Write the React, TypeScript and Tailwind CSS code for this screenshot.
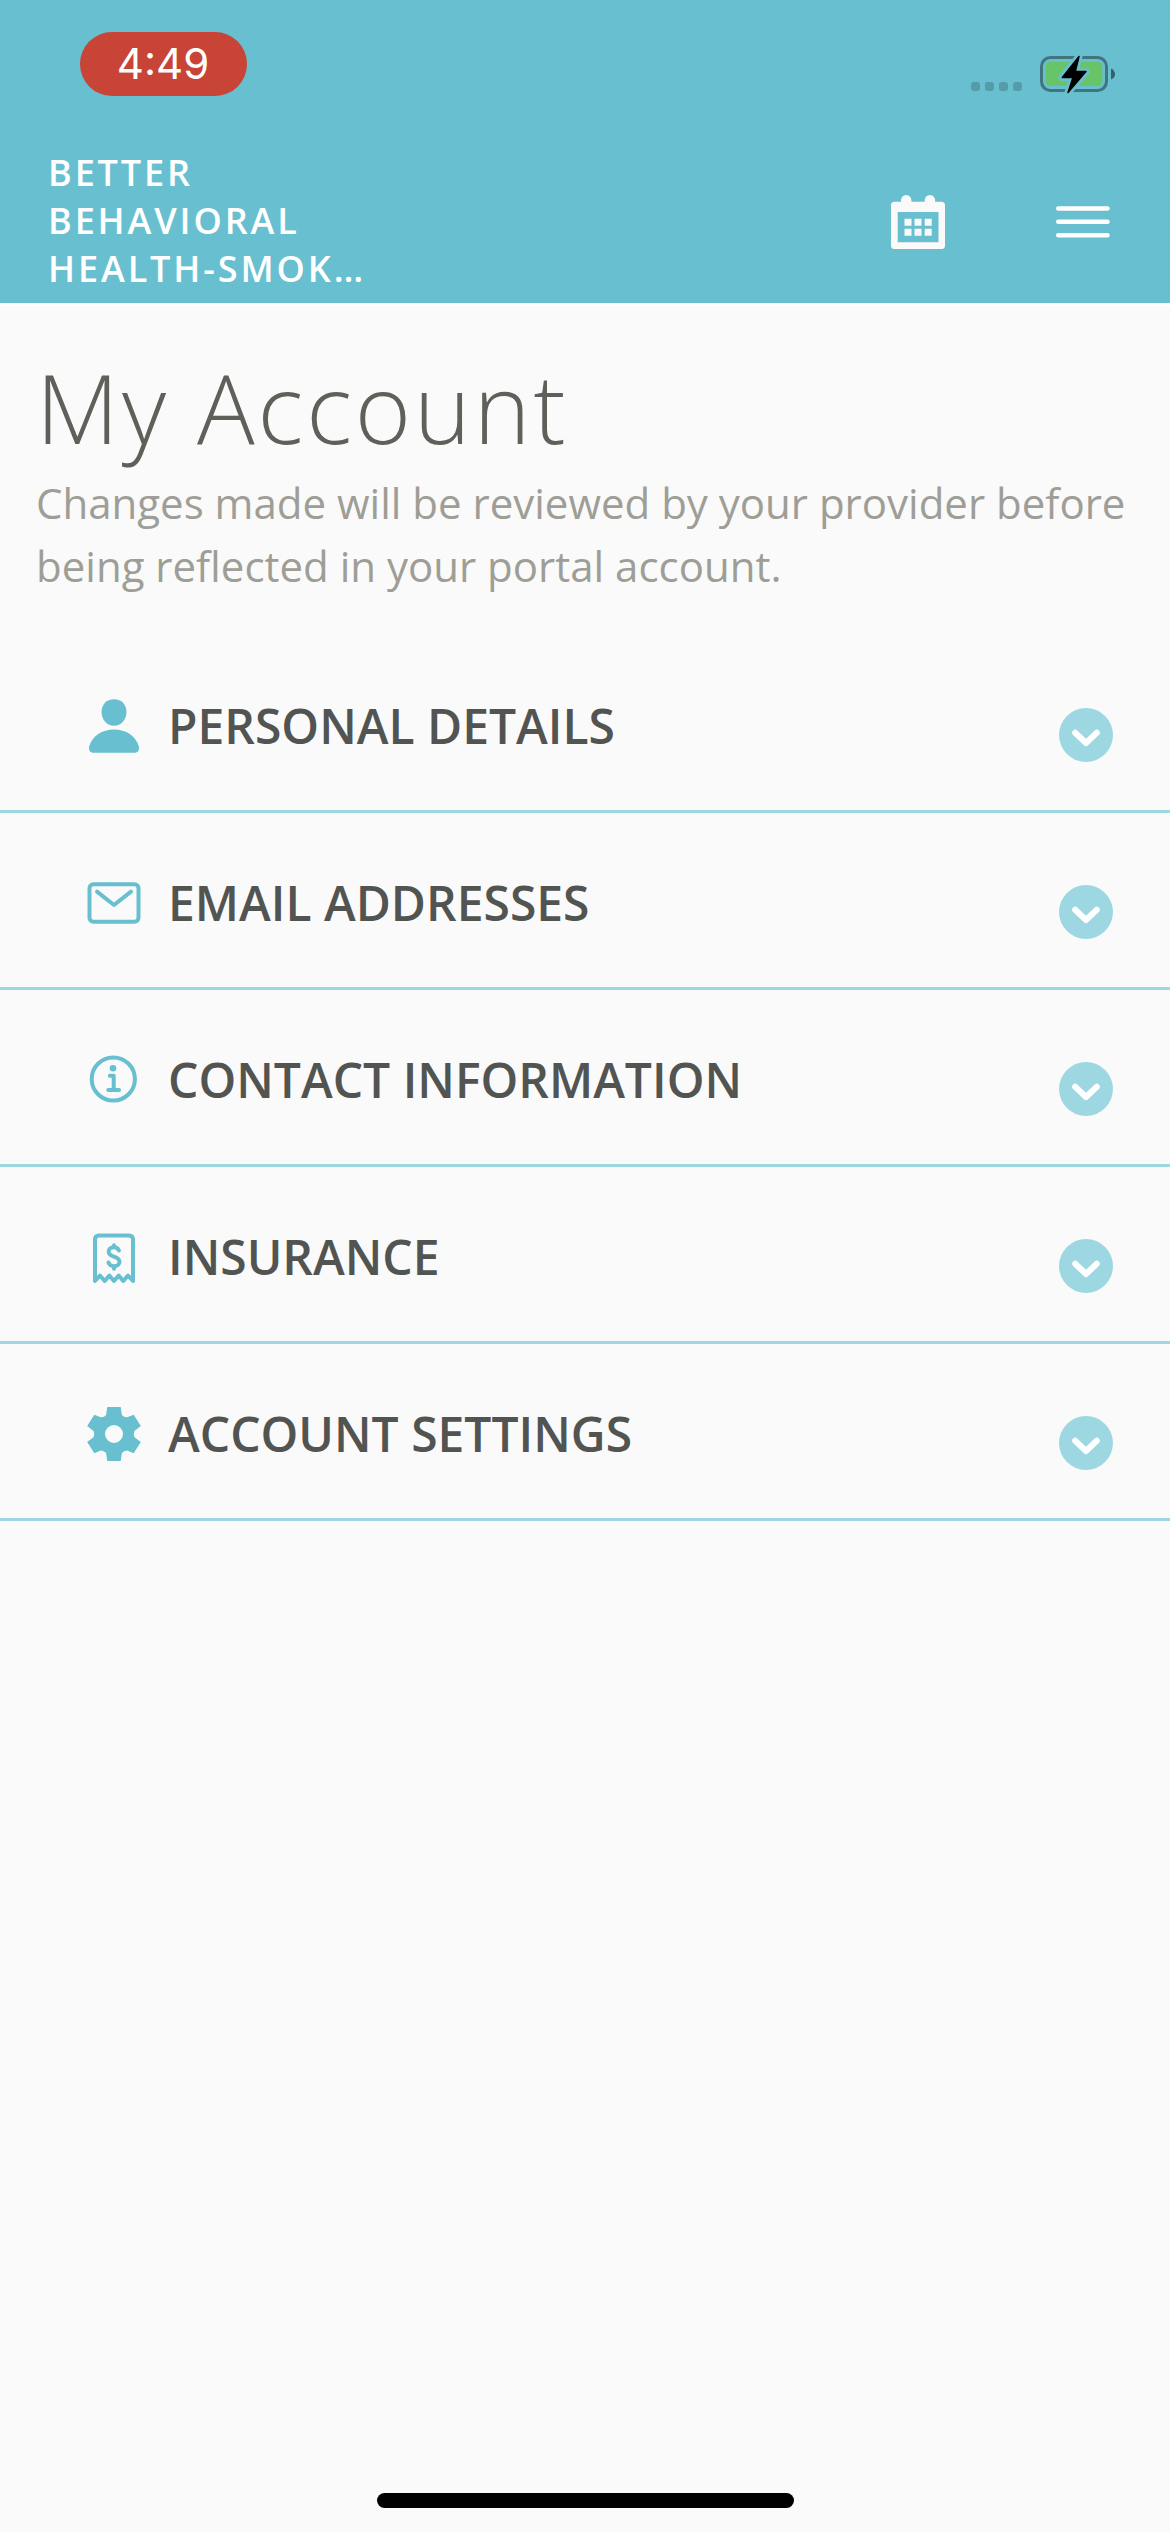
import type { ReactNode } from 'react';

const PersonIcon = () => (
  <svg viewBox="0 0 54 54" className="size-[54px]" fill="#68bfd0">
    <path d="M27 .2C34.5 .2 39.5 5.500 39.500 13C39.500 20.500 34 26.800 27 26.800S14.500 20.500 14.500 13C14.500 5.500 19.500 .2 27 .2Z" />
    <path d="M27 30.500C39 30.500 49 37 51.800 47.500C52.600 51 51 53.800 47.500 53.800H6.500C3 53.800 1.400 51 2.200 47.500C5 37 15 30.500 27 30.500Z" />
  </svg>
);

const MailIcon = () => (
  <svg viewBox="0 0 54 54" className="size-[54px]" fill="none" stroke="#68bfd0" strokeWidth="4" strokeLinecap="round" strokeLinejoin="round">
    <rect x="2.500" y="8.200" width="49" height="37.600" rx="4" />
    <path d="M10 15.700L27 29L44 15.700" />
  </svg>
);

const InfoIcon = () => (
  <svg viewBox="0 0 54 54" className="size-[54px]" fill="none" stroke="#68bfd0" strokeWidth="4" strokeLinecap="round" strokeLinejoin="round">
    <circle cx="26.300" cy="26" r="21.600" />
    <circle cx="26" cy="15.300" r="3.300" fill="#68bfd0" stroke="none" />
    <path d="M22.800 22.800H26.700V37M21.300 37H32" />
  </svg>
);

const ReceiptIcon = () => (
  <svg viewBox="0 0 54 54" className="size-[54px]" fill="none" stroke="#68bfd0" strokeWidth="4" strokeLinecap="round" strokeLinejoin="round">
    <path d="M8 51V9.500Q8 5.400 12 5.400H42Q46 5.400 46 9.500V51L41 45.500L36.300 51L31.700 45.500L27 51L22.300 45.500L17.700 51L13 45.500Z" />
    <path d="M32 20.500C31 18.300 29.200 17.300 26.800 17.300C23.700 17.300 21.700 19.200 21.700 21.700C21.700 24.500 24 25.600 26.900 26.600C30 27.700 32.500 29 32.500 31.700C32.500 34.300 30.300 36.200 27 36.200C24.200 36.200 22.300 35 21.500 32.500M27 15.200V17M27 36.500V38.800" />
  </svg>
);

const GearIcon = () => (
  <svg viewBox="0 0 54 54" className="size-[54px]" fill="#68bfd0" fillRule="evenodd">
    <path d="M20.300 0H33.700L34.900 8Q37 10.700 40.300 10.300L46.700 7.700L53.800 19L47.500 24Q46 27 47.500 30.200L53.800 35L46.700 46.300L40.300 43.400Q37 43.300 34.900 46L33.700 54H20.300L19.100 46Q17 43.300 13.700 43.400L7.300 46.300L.2 35L6.500 30.200Q8 27 6.500 24L.2 19L7.300 7.700L13.700 10.300Q17 10.700 19.100 8ZM27 18a9 9 0 1 0 0 18a9 9 0 1 0 0-18Z" />
  </svg>
);

const ChevronBadge = () => (
  <svg viewBox="0 0 54 54" className="size-[54px]">
    <circle cx="27" cy="27" r="27" fill="#9dd8e2" />
    <path d="M16.200 24.800L27 35L37.800 24.800" fill="none" stroke="#fff" strokeWidth="6" strokeLinecap="round" strokeLinejoin="round" />
  </svg>
);

const BatteryIcon = () => (
  <svg viewBox="0 0 76 40" className="h-[40px] w-[76px]">
    <rect x="1.500" y="3.500" width="65" height="33" rx="9" fill="none" stroke="#41747f" strokeWidth="3" />
    <rect x="5.700" y="7.700" width="56.600" height="24.300" rx="4.500" fill="#67c568" />
    <path d="M71 14.500Q75 16.500 75 20.200T71 25.500Z" fill="#33616b" />
    <path d="M39 2.500L22 23.500H33L28 38.500L46 18H35Z" fill="#68bfd0" stroke="#68bfd0" strokeWidth="7" strokeLinejoin="round" />
    <path d="M39 2.500L22.300 23.500H33L28 38.500L46 17.500H35.300Z" fill="#000" stroke="#000" strokeWidth="1.500" strokeLinejoin="round" />
  </svg>
);

const CalendarIcon = () => (
  <svg viewBox="0 0 54 54" className="size-[54px]" fill="#fafafa">
    <path d="M10 8V5.200a5.200 5.200 0 0 1 10.400 0V8ZM33.700 8V5.200a5.200 5.200 0 0 1 10.400 0V8Z" />
    <path fillRule="evenodd" d="M3.500 6.700H50.500Q54 6.700 54 10.200V50.500Q54 54 50.500 54H3.500Q0 54 0 50.500V10.200Q0 6.700 3.500 6.700ZM6.700 17V47.200H47.500V17Z" />
    <path d="M13.500 23.700h7v7h-7zM23.500 23.700h7v7h-7zM33.700 23.700h7v7h-7zM13.500 33.800h7v7h-7zM23.500 33.800h7v7h-7zM33.700 33.800h7v7h-7z" />
  </svg>
);

const MenuIcon = () => (
  <svg viewBox="0 0 54 32" className="h-[32px] w-[54px]" stroke="#fff" strokeWidth="4.500" strokeLinecap="round">
    <path d="M2.250 2.400H51.500M2.250 15.800H51.500M2.250 29.300H51.500" />
  </svg>
);

const sections: { label: string; icon: ReactNode }[] = [
  { label: 'PERSONAL DETAILS', icon: <PersonIcon /> },
  { label: 'EMAIL ADDRESSES', icon: <MailIcon /> },
  { label: 'CONTACT INFORMATION', icon: <InfoIcon /> },
  { label: 'INSURANCE', icon: <ReceiptIcon /> },
  { label: 'ACCOUNT SETTINGS', icon: <GearIcon /> },
];

export default function App() {
  return (
    <div className="flex h-[2532px] w-[1170px] flex-col overflow-hidden bg-[#fafafa] font-['Open_Sans',sans-serif]">
      <header className="flex h-[306px] shrink-0 flex-col border-b-[3px] border-white bg-[#68bfd0]">
        <div className="flex h-[149px] shrink-0 items-start justify-between pr-[54px] pl-[80px]">
          <div className="mt-8 flex h-16 w-[167px] items-center justify-center rounded-[32px] bg-[#c74436] pr-px font-['Inter',sans-serif] text-[42px] leading-[64px] font-normal text-white">
            4:49
          </div>
          <div className="mt-[54px] flex items-start">
            <div className="mt-7 mr-[18px] flex gap-[5px]">
              {[0, 1, 2, 3].map((dot) => (
                <span key={dot} className="size-[9px] rounded-[3px] bg-[#559ba9]" />
              ))}
            </div>
            <BatteryIcon />
          </div>
        </div>
        <div className="flex items-start pl-12">
          <div className="w-[843px] text-[36px] leading-[48px] font-semibold tracking-[2.9px] text-white">
            <div>BETTER</div>
            <div>BEHAVIORAL</div>
            <div>HEALTH-SMOK…</div>
          </div>
          <div className="mt-[46px]">
            <CalendarIcon />
          </div>
          <div className="mt-[57px] ml-[111px]">
            <MenuIcon />
          </div>
        </div>
      </header>
      <main className="flex flex-1 flex-col">
        <div className="h-[330px] shrink-0 px-9 pt-[41px]">
          <h1 className="text-[96px] leading-[120px] font-light tracking-[3px] text-[#60605a]">My Account</h1>
          <p className="mt-1 text-[42px] leading-[63px] whitespace-nowrap text-[#9e9e96]">
            Changes made will be reviewed by your provider before
            <br />
            being reflected in your portal account.
          </p>
        </div>
        {sections.map(({ label, icon }) => (
          <div key={label} className="flex h-[177px] shrink-0 items-start border-b-[3px] border-[#9dd8e2] pr-[57px] pl-[87px]">
            <div className="mt-[63px] w-[81px]">{icon}</div>
            <div className="mt-[57px] flex-1 text-[48px] leading-[66px] font-semibold text-[#525452]">{label}</div>
            <div className="mt-[72px]">
              <ChevronBadge />
            </div>
          </div>
        ))}
      </main>
      <div className="mb-6 h-[15px] w-[417px] shrink-0 self-center rounded-full bg-black" />
    </div>
  );
}
